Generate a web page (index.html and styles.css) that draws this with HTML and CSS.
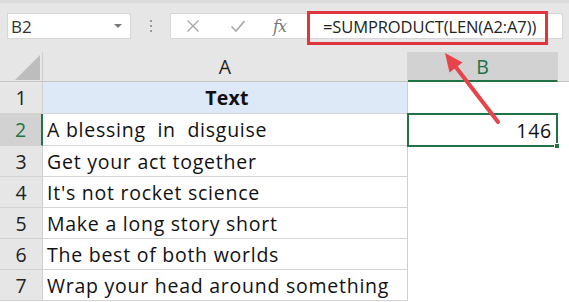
FILE: index.html
```html
<!DOCTYPE html>
<html>
<head>
<meta charset="utf-8">
<link rel="stylesheet" href="styles.css">
</head>
<body>
<div class="app">
  <div class="toolbar">
    <div class="namebox">
      <span class="ref">B2</span>
      <span class="caret"></span>
    </div>
    <div class="grip"><i></i><i></i><i></i></div>
    <div class="fbar">
      <div class="ficons">
        <svg class="ico" width="14" height="14" viewBox="0 0 14 14"><path d="M1.5 1.5 L12.5 12.5 M12.5 1.5 L1.5 12.5" stroke="#a8a8a8" stroke-width="1.4" fill="none"/></svg>
        <svg class="ico" width="16" height="14" viewBox="0 0 16 14"><path d="M1.5 7.5 L6 12 L14.5 2" stroke="#a8a8a8" stroke-width="1.6" fill="none"/></svg>
        <span class="fx">fx</span>
      </div>
      <div class="formula">=SUMPRODUCT(LEN(A2:A7))</div>
      <div class="highlight"></div>
    </div>
  </div>
  <div class="sheet">
    <div class="corner"><span class="tri"></span></div>
    <div class="colhead">A</div>
    <div class="colhead sel">B</div>
    <div class="filler"></div>

    <div class="rowhead">1</div>
    <div class="cell hdr">Text</div>
    <div class="bcell"></div>
    <div class="filler w"></div>

    <div class="rowhead sel">2</div>
    <div class="cell">A blessing&nbsp; in&nbsp; disguise</div>
    <div class="bcell active">146<span class="handle"></span></div>
    <div class="filler w"></div>

    <div class="rowhead">3</div>
    <div class="cell">Get your act together</div>
    <div class="bcell"></div>
    <div class="filler w"></div>

    <div class="rowhead">4</div>
    <div class="cell">It's not rocket science</div>
    <div class="bcell"></div>
    <div class="filler w"></div>

    <div class="rowhead">5</div>
    <div class="cell">Make a long story short</div>
    <div class="bcell"></div>
    <div class="filler w"></div>

    <div class="rowhead">6</div>
    <div class="cell">The best of both worlds</div>
    <div class="bcell"></div>
    <div class="filler w"></div>

    <div class="rowhead">7</div>
    <div class="cell">Wrap your head around something</div>
    <div class="bcell"></div>
    <div class="filler w"></div>
  </div>
  <svg class="arrow" width="569" height="302" viewBox="0 0 569 302">
    <line x1="455" y1="66" x2="498" y2="122" stroke="#e8434b" stroke-width="4" stroke-linecap="round"/>
    <polygon points="445,53 449.5,72.5 462.5,62.5" fill="#e8434b"/>
  </svg>
</div>
</body>
</html>
```
FILE: styles.css
```css
* { box-sizing: border-box; }
html, body { margin: 0; padding: 0; }
body { width: 569px; height: 302px; overflow: hidden; background: #fff; font-family: "Open Sans", "Liberation Sans", sans-serif; }
.app { position: relative; width: 569px; height: 302px; }

.toolbar {
  height: 52px;
  background: #e6e6e6;
  border-top: 3px solid #dcdcdc;
  display: flex;
  align-items: flex-start;
  padding: 10px 0 0 7px;
}
.namebox {
  width: 124px; height: 26px;
  background: #fff;
  border: 1px solid #d6d6d6;
  display: flex; align-items: center; justify-content: space-between;
  padding: 0 8px 0 3px;
}
.ref { font-size: 17px; color: #333; }
.caret { width: 0; height: 0; border-left: 4px solid transparent; border-right: 4px solid transparent; border-top: 4px solid #7a7a7a; }
.grip { width: 39px; height: 26px; display: flex; flex-direction: column; align-items: center; justify-content: center; gap: 3px; }
.grip i { width: 2px; height: 2px; background: #9a9a9a; display: block; }
.fbar {
  position: relative;
  width: 393px; height: 26px;
  background: #fff;
  border: 1px solid #d6d6d6;
  display: flex; align-items: center;
}
.ficons { width: 136px; display: flex; align-items: center; padding-left: 15px; }
.ficons .ico { margin-right: 30px; }
.ficons svg:nth-child(2) { margin-right: 27px; }
.fx { font-family: "DejaVu Serif", "Liberation Serif", serif; font-style: italic; font-size: 16px; color: #777; letter-spacing: -1px; }
.formula { font-size: 16.5px; color: #222; padding-left: 16px; letter-spacing: -0.1px; }
.highlight {
  position: absolute; left: 136px; top: -3px;
  width: 241px; height: 34px;
  border: 3px solid #e0343e;
}

.sheet {
  display: grid;
  grid-template-columns: 43px 365px 150px 11px;
  grid-template-rows: 30px 32px 32px 31px 31px 31px 31px 31px;
}
.corner { background: #e6e6e6; border-right: 1px solid #cfcfcf; border-bottom: 1px solid #c6c6c6; position: relative; }
.tri { position: absolute; right: 2px; bottom: 1px; width: 0; height: 0; border-left: 25px solid transparent; border-bottom: 25px solid #bdbdbd; }
.colhead {
  background: #e6e6e6; border-bottom: 1px solid #c6c6c6; border-right: 1px solid #d4d4d4;
  display: flex; align-items: center; justify-content: center;
  font-size: 19.5px; color: #222;
}
.colhead.sel { background: #d2d2d2; color: #217346; border-bottom: 2px solid #217346; }
.filler { background: #e6e6e6; border-bottom: 1px solid #c6c6c6; }
.filler.w { background: #fff; border: 0; }

.rowhead {
  background: #e6e6e6; border-right: 1px solid #cfcfcf; border-bottom: 1px solid #d2d2d2;
  display: flex; align-items: center; justify-content: center;
  font-size: 19.5px; color: #222;
}
.rowhead.sel { background: #d2d2d2; color: #217346; border-right: 2px solid #217346; }
.cell {
  border-right: 1px solid #d0d0d0; border-bottom: 1px solid #d4d4d4;
  display: flex; align-items: center;
  padding-left: 4px;
  font-size: 19.5px; letter-spacing: 0.75px; color: #111;
  white-space: nowrap;
}
.cell.hdr { background: #dde9f6; justify-content: center; font-weight: 700; letter-spacing: 0.2px; }
.bcell { position: relative; display: flex; align-items: center; justify-content: flex-end; font-size: 19.5px; letter-spacing: 0.75px; color: #111; padding-right: 4px; }
.bcell.active { border: 2px solid #217346; margin: -1px 0 -1px -1px; }
.handle { position: absolute; right: -4px; bottom: -4px; width: 6px; height: 6px; background: #217346; border: 1px solid #fff; }

.arrow { position: absolute; left: 0; top: 0; pointer-events: none; }
```
